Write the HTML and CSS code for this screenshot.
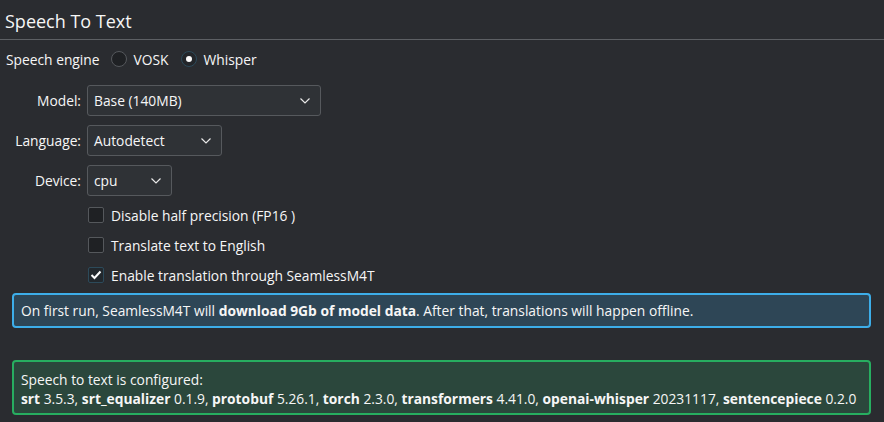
FILE: index.html
```html
<!DOCTYPE html>
<html>
<head>
<meta charset="utf-8">
<link rel="stylesheet" href="styles.css">
</head>
<body>
<div class="page">
  <div class="header">Speech To Text</div>
  <div class="engine">
    <span>Speech engine</span>
    <label class="radio"><span class="dot"></span>VOSK</label>
    <label class="radio on"><span class="dot"></span>Whisper</label>
  </div>
  <div class="form">
    <span class="lbl">Model:</span>
    <div class="combo w-model"><span>Base (140MB)</span><svg width="12" height="8" viewBox="0 0 12 8"><path d="M1.5 1.5 L6 6 L10.5 1.5" fill="none" stroke="#e8e8e8" stroke-width="1.2"/></svg></div>
    <span class="lbl">Language:</span>
    <div class="combo w-lang"><span>Autodetect</span><svg width="12" height="8" viewBox="0 0 12 8"><path d="M1.5 1.5 L6 6 L10.5 1.5" fill="none" stroke="#e8e8e8" stroke-width="1.2"/></svg></div>
    <span class="lbl">Device:</span>
    <div class="combo w-dev"><span>cpu</span><svg width="12" height="8" viewBox="0 0 12 8"><path d="M1.5 1.5 L6 6 L10.5 1.5" fill="none" stroke="#e8e8e8" stroke-width="1.2"/></svg></div>
  </div>
  <div class="checks">
    <label class="check"><span class="box"></span>Disable half precision (FP16 )</label>
    <label class="check"><span class="box"></span>Translate text to English</label>
    <label class="check"><span class="box on"><svg width="12" height="10" viewBox="0 0 12 10"><path d="M1.5 5 L4.5 8 L10.5 1.5" fill="none" stroke="#fcfcfc" stroke-width="2"/></svg></span>Enable translation through SeamlessM4T</label>
  </div>
  <div class="msg info">On first run, SeamlessM4T will <b>download 9Gb of model data</b>. After that, translations will happen offline.</div>
  <div class="msg ok">Speech to text is configured:<br><b>srt</b> 3.5.3, <b>srt_equalizer</b> 0.1.9, <b>protobuf</b> 5.26.1, <b>torch</b> 2.3.0, <b>transformers</b> 4.41.0, <b>openai-whisper</b> 20231117, <b>sentencepiece</b> 0.2.0</div>
</div>
</body>
</html>
```
FILE: styles.css
```css
html, body {
  margin: 0;
  padding: 0;
  background: #2a2c30;
}
body {
  font-family: "Open Sans", "Noto Sans", sans-serif;
  font-size: 13.8px;
  color: #f6f6f6;
  width: 884px;
  height: 422px;
  overflow: hidden;
}
.header {
  height: 40px;
  box-sizing: border-box;
  border-bottom: 1px solid #5d6064;
  font-size: 18px;
  padding-left: 5px;
  line-height: 42px;
}
.engine {
  display: flex;
  align-items: center;
  height: 38px;
  padding-left: 6px;
  padding-bottom: 1px;
}
.radio {
  display: flex;
  align-items: center;
  margin-left: 11px;
}
.radio .dot {
  width: 14px;
  height: 14px;
  border-radius: 50%;
  border: 1px solid #55585c;
  background: #1f2124;
  margin-right: 7px;
  display: flex;
  align-items: center;
  justify-content: center;
}
.radio.on .dot {
  border-color: #2c4a5a;
  background: #23262a;
}
.radio.on .dot::after {
  content: "";
  width: 6px;
  height: 6px;
  border-radius: 50%;
  background: #fcfcfc;
}
.radio + .radio { margin-left: 12px; }
.form {
  display: grid;
  grid-template-columns: 81px auto;
  column-gap: 6px;
  row-gap: 9px;
  justify-items: start;
  align-items: center;
  margin-top: 6px;
}
.lbl {
  justify-self: end;
}
.combo {
  height: 31px;
  box-sizing: border-box;
  border: 1px solid #56595d;
  border-radius: 3px;
  background: #2f3236;
  display: flex;
  align-items: center;
  justify-content: space-between;
  padding: 0 9px 0 6px;
}
.w-model { width: 234px; }
.w-lang { width: 135px; }
.w-dev { width: 85px; }
.checks {
  display: flex;
  flex-direction: column;
  gap: 14px;
  padding-left: 88px;
  margin-top: 11px;
}
.check {
  display: flex;
  align-items: center;
  height: 16px;
}
.box {
  width: 16px;
  height: 16px;
  box-sizing: border-box;
  border: 1px solid #55585c;
  border-radius: 2px;
  background: #1f2124;
  margin-right: 7px;
  display: flex;
  align-items: center;
  justify-content: center;
}
.box.on {
  border-color: #2c4a5a;
  background: #22282d;
}
.msg {
  margin: 0 13px 0 12px;
  border: 2px solid;
  border-radius: 4px;
  padding: 0 7px;
  white-space: nowrap;
}
.info {
  margin-top: 10px;
  border-color: #3daee9;
  background: #2e4656;
  height: 35px;
  box-sizing: border-box;
  line-height: 31px;
}
.ok {
  margin-top: 32px;
  border-color: #27ae60;
  background: #2b473c;
  height: 55px;
  box-sizing: border-box;
  line-height: 19px;
  padding-top: 8px;
}
b { font-weight: 700; }
```
